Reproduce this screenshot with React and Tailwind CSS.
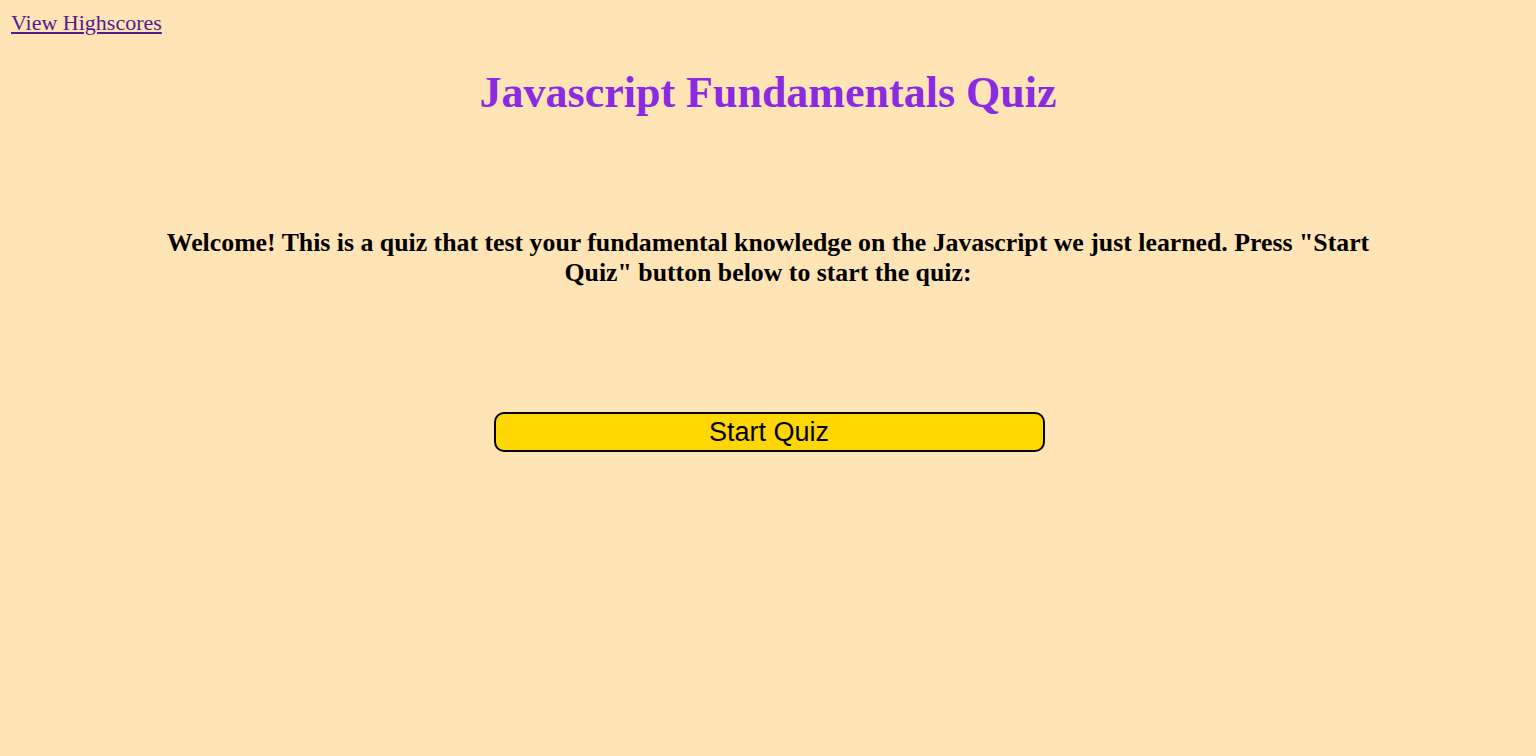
export default function App() {
  return (
    <div className="min-h-screen bg-[#ffe4b5] font-['Liberation_Serif',serif] text-black">
      <header className="px-[11px] pt-[10px]">
        <a href="#" className="text-[22px] leading-[26px] text-[#551a8b] underline">
          View Highscores
        </a>
      </header>

      <main className="flex flex-col items-center">
        <h1 className="mt-[31px] text-[44px] leading-[50px] font-bold text-[#8a2be2]">
          Javascript Fundamentals Quiz
        </h1>

        <p className="mt-[110px] w-[1220px] text-center text-[25.8px] leading-[30px] font-bold">
          Welcome! This is a quiz that test your fundamental knowledge on the Javascript we just learned. Press "Start Quiz" button below to start the quiz:
        </p>

        <button className="mt-[124px] ml-[2px] w-[551px] h-[40px] rounded-[10px] border-2 border-black bg-[#ffd700] font-['Liberation_Sans',sans-serif] text-[27px] leading-none">
          Start Quiz
        </button>
      </main>
    </div>
  );
}
